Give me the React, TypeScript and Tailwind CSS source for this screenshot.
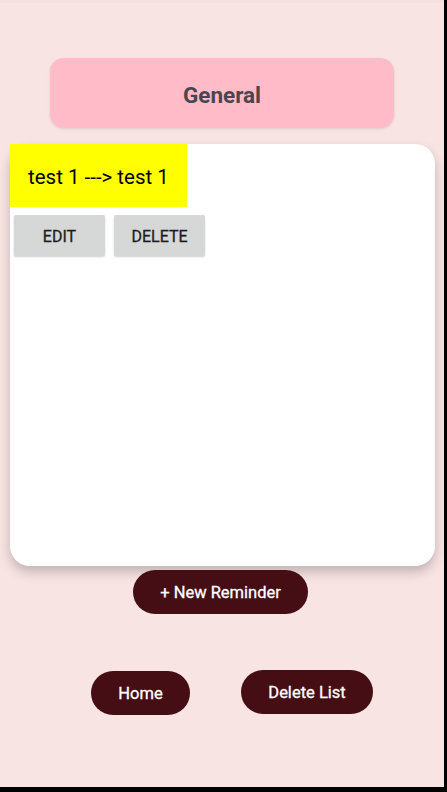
export default function App() {
  return (
    <div className="flex h-[792px] w-[447px] bg-black font-['Roboto',sans-serif]">
      <div className="flex h-[787px] w-[444px] flex-col bg-[#f9e4e4]">
        <div className="h-[3px] bg-[#f3dfdf]" />
        <div className="mt-[55px] flex justify-center">
          <div className="flex h-[70px] w-[344px] items-center justify-center rounded-[14px] bg-[#ffbcc8] pt-[5px] shadow-[0_1px_3px_rgba(0,0,0,0.12)]">
            <span className="text-[22.5px] font-bold text-[#4a4550]">General</span>
          </div>
        </div>

        <div className="ml-[10px] mt-[16px] h-[422px] w-[425px] rounded-[20px] bg-white shadow-[0_6px_12px_rgba(0,0,0,0.22)]">
          <div className="flex h-[63px] w-[177px] items-center bg-[#ffff00] pl-[18px] pt-[4px]">
            <span className="text-[20.5px] text-black">test 1 ---&gt; test 1</span>
          </div>
          <div className="mt-[8px] flex gap-[9px] pl-[4px]">
            <button className="h-[41px] w-[91px] rounded-[2px] bg-[#d6d7d7] pt-[2px] text-[16px] text-[#1d1d1d] shadow-[0_1px_2px_rgba(0,0,0,0.2)] [-webkit-text-stroke:0.3px_#1d1d1d]">
              EDIT
            </button>
            <button className="h-[41px] w-[91px] rounded-[2px] bg-[#d6d7d7] pt-[2px] text-[16px] text-[#1d1d1d] shadow-[0_1px_2px_rgba(0,0,0,0.2)] [-webkit-text-stroke:0.3px_#1d1d1d]">
              DELETE
            </button>
          </div>
        </div>

        <div className="mt-[4px] flex pl-[133px]">
          <button className="h-[44px] w-[175px] rounded-full bg-[#450e15] pt-[3px] text-[16.5px] text-white [-webkit-text-stroke:0.3px_white]">
            + New Reminder
          </button>
        </div>

        <div className="mt-[56px] flex pl-[91px]">
          <button className="mt-[1px] h-[44px] w-[99px] rounded-full bg-[#450e15] pt-[2px] text-[16.5px] text-white [-webkit-text-stroke:0.3px_white]">
            Home
          </button>
          <button className="ml-[51px] h-[44px] w-[132px] rounded-full bg-[#450e15] pt-[3px] text-[16.5px] text-white [-webkit-text-stroke:0.3px_white]">
            Delete List
          </button>
        </div>
      </div>
    </div>
  );
}
